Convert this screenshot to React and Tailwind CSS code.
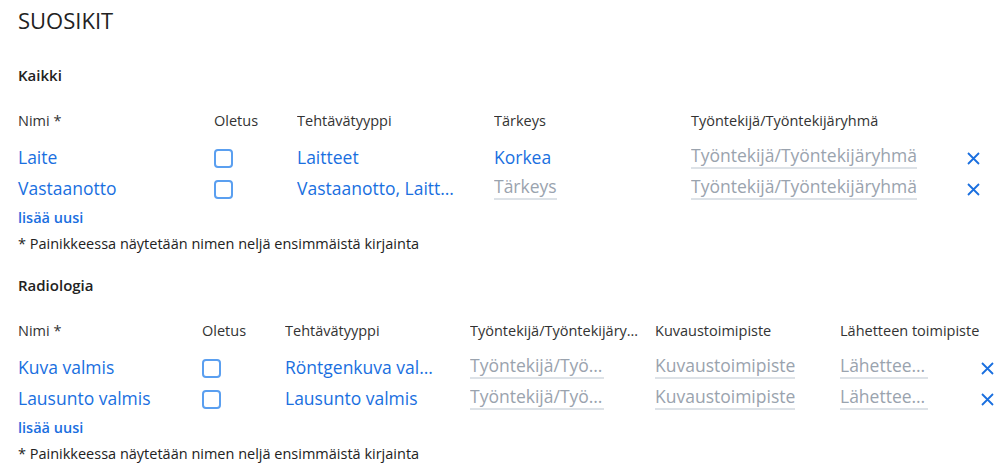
const blue = "text-[#1a6fdf]";

const XIcon = () => (
  <svg width="13" height="13" viewBox="0 0 13 13" className="text-[#1a6fdf]">
    <path d="M1 1 L12 12 M12 1 L1 12" stroke="currentColor" strokeWidth="1.8" fill="none" />
  </svg>
);

const Checkbox = () => (
  <span className="block w-[19px] h-[19px] rounded-[4px] border-2 border-[#5a9ff0]" />
);

const Field = ({ value, placeholder, w }) =>
  value ? (
    <span className={`block truncate ${blue}`} style={{ maxWidth: w }}>
      {value}
    </span>
  ) : (
    <span
      className="inline-block mt-[4px] truncate text-[#9aa3ae] border-b-2 border-[#dde2e7] leading-[24px]"
      style={{ maxWidth: w }}
    >
      {placeholder}
    </span>
  );

const Section = ({ title, cols, headers, rows }) => (
  <div>
    <h2 className="text-[15px] font-semibold text-[#222] mt-[28px] leading-[22px]">{title}</h2>
    <div
      className="grid mt-[24px] text-[14.5px] text-[#333] leading-[22px]"
      style={{ gridTemplateColumns: cols }}
    >
      {headers.map((h, i) => (
        <div
          key={i}
          className={i === headers.length - 1 ? "whitespace-nowrap" : "truncate pr-3"}
        >
          {h}
        </div>
      ))}
      <div />
    </div>
    <div className="mt-[7px]">
      {rows.map((r, ri) => (
        <div
          key={ri}
          className="grid items-center h-[31px] text-[17.5px]"
          style={{ gridTemplateColumns: cols }}
        >
          <div className={blue}>{r[0]}</div>
          <div className="pt-[3px]"><Checkbox /></div>
          {r.slice(1).map((f, fi) => (
            <div key={fi}>
              <Field {...f} />
            </div>
          ))}
          <div className="flex pt-[2px]"><XIcon /></div>
        </div>
      ))}
    </div>
    <div className={`text-[14.5px] font-semibold ${blue} mt-[6px] leading-[22px]`}>lisää uusi</div>
    <div className="text-[14.5px] text-[#222] mt-[4px] leading-[22px]">
      * Painikkeessa näytetään nimen neljä ensimmäistä kirjainta
    </div>
  </div>
);

export default function App() {
  return (
    <div
      className="w-[1000px] h-[474px] bg-white px-[18px] pt-[4px] overflow-hidden"
      style={{ fontFamily: '"Segoe UI", "Open Sans", sans-serif' }}
    >
      <h1 className="text-[22px] text-[#222] leading-[32px]">SUOSIKIT</h1>
      <Section
        title="Kaikki"
        cols="196px 83px 197px 197px 276px 13px"
        headers={["Nimi *", "Oletus", "Tehtävätyyppi", "Tärkeys", "Työntekijä/Työntekijäryhmä"]}
        rows={[
          [
            "Laite",
            { value: "Laitteet", w: 160 },
            { value: "Korkea", w: 160 },
            { placeholder: "Työntekijä/Työntekijäryhmä", w: 230 },
          ],
          [
            "Vastaanotto",
            { value: "Vastaanotto, Laitteet", w: 158 },
            { placeholder: "Tärkeys", w: 160 },
            { placeholder: "Työntekijä/Työntekijäryhmä", w: 230 },
          ],
        ]}
      />
      <div className="-mt-[9px]">
        <Section
          title="Radiologia"
          cols="184px 83px 185px 185px 185px 141px 13px"
          headers={["Nimi *", "Oletus", "Tehtävätyyppi", "Työntekijä/Työntekijäryhmä", "Kuvaustoimipiste", "Lähetteen toimipiste"]}
          rows={[
            [
              "Kuva valmis",
              { value: "Röntgenkuva valmis", w: 151 },
              { placeholder: "Työntekijä/Työntekijäryhmä", w: 134 },
              { placeholder: "Kuvaustoimipiste", w: 150 },
              { placeholder: "Lähetteen toimipiste", w: 88 },
            ],
            [
              "Lausunto valmis",
              { value: "Lausunto valmis", w: 151 },
              { placeholder: "Työntekijä/Työntekijäryhmä", w: 134 },
              { placeholder: "Kuvaustoimipiste", w: 150 },
              { placeholder: "Lähetteen toimipiste", w: 88 },
            ],
          ]}
        />
      </div>
    </div>
  );
}
